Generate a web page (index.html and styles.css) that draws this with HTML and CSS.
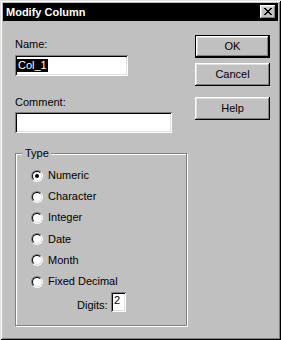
FILE: index.html
```html
<!DOCTYPE html>
<html>
<head>
<meta charset="utf-8">
<link rel="stylesheet" href="styles.css">
</head>
<body>
<div class="window">
  <div class="titlebar">
    <span class="title">Modify Column</span>
    <span class="close">
      <svg width="8" height="7" viewBox="0 0 8 7" shape-rendering="crispEdges"><path d="M0 0h2v1H0zM6 0h2v1H6zM1 1h2v1H1zM5 1h2v1H5zM2 2h4v1H2zM3 3h2v1H3zM2 4h4v1H2zM1 5h2v1H1zM5 5h2v1H5zM0 6h2v1H0zM6 6h2v1H6z" fill="#000"/></svg>
    </span>
  </div>
  <div class="content">
    <div class="left">
      <div class="label name-label">Name:</div>
      <div class="field name-field"><span class="sel">Col_1</span></div>
      <div class="label comment-label">Comment:</div>
      <div class="field comment-field"></div>
      <div class="group">
        <span class="legend">Type</span>
        <div class="options">
          <div class="option"><span class="radio checked"><span class="dot"></span></span><span class="opt-text">Numeric</span></div>
          <div class="option"><span class="radio"></span><span class="opt-text">Character</span></div>
          <div class="option"><span class="radio"></span><span class="opt-text">Integer</span></div>
          <div class="option"><span class="radio"></span><span class="opt-text">Date</span></div>
          <div class="option"><span class="radio"></span><span class="opt-text">Month</span></div>
          <div class="option"><span class="radio"></span><span class="opt-text">Fixed Decimal</span></div>
        </div>
        <div class="digits">
          <span class="digits-label">Digits:</span>
          <div class="field digits-field">2</div>
        </div>
      </div>
    </div>
    <div class="right">
      <div class="btn default">OK</div>
      <div class="btn cancel">Cancel</div>
      <div class="btn help">Help</div>
    </div>
  </div>
</div>
</body>
</html>
```
FILE: styles.css
```css
html, body {
  margin: 0;
  padding: 0;
  background: #c0c0c0;
}
body {
  font-family: "Liberation Sans", Arial, sans-serif;
  font-size: 11px;
  line-height: 13px;
  color: #000;
}
.window {
  width: 281px;
  height: 340px;
  box-sizing: border-box;
  padding: 3px;
  background: #c0c0c0;
  box-shadow: inset 1px 1px 0 #dfdfdf, inset -1px -1px 0 #000, inset 2px 2px 0 #fff, inset -2px -2px 0 #808080;
}
.titlebar {
  height: 18px;
  background: #000;
  display: flex;
  align-items: center;
  padding: 0 2px 0 3px;
}
.title {
  color: #fff;
  font-weight: bold;
  font-size: 11px;
  flex: 1;
}
.close {
  width: 16px;
  height: 14px;
  box-sizing: border-box;
  background: #c0c0c0;
  box-shadow: inset -1px -1px 0 #000, inset 1px 1px 0 #fff, inset -2px -2px 0 #808080, inset 2px 2px 0 #dfdfdf;
  display: flex;
  align-items: center;
  justify-content: center;
  padding: 0 1px 1px 0;
}
.close svg { display: block; }
.content {
  display: flex;
  padding: 0 8px 0 12px;
}
.left {
  width: 173px;
  display: flex;
  flex-direction: column;
  align-items: flex-start;
}
.label { height: 13px; }
.name-label { margin-top: 17px; }
.comment-label { margin-top: 20px; }
.field {
  box-sizing: border-box;
  background: #fff;
  box-shadow: inset 1px 1px 0 #808080, inset -1px -1px 0 #fff, inset 2px 2px 0 #000, inset -2px -2px 0 #dfdfdf;
  padding: 4px 0 0 2px;
}
.name-field {
  margin-top: 4px;
  width: 113px;
  height: 21px;
}
.comment-field {
  margin-top: 3px;
  width: 157px;
  height: 21px;
}
.sel {
  display: inline-block;
  background: #000;
  color: #fff;
  padding: 0 1px;
  height: 13px;
}
.group {
  position: relative;
  margin-top: 20px;
  width: 172px;
  box-sizing: border-box;
  border: 1px solid #808080;
  box-shadow: inset 1px 1px 0 #fff, 1px 1px 0 #fff;
  padding: 11px 0 13px 15px;
}
.legend {
  position: absolute;
  top: -7px;
  left: 6px;
  padding: 0 2px 0 3px;
  background: #c0c0c0;
}
.options {
  display: flex;
  flex-direction: column;
}
.option {
  height: 21.2px;
  display: flex;
  align-items: center;
}
.radio {
  width: 12px;
  height: 12px;
  box-sizing: border-box;
  border-radius: 50%;
  border: 1px solid;
  border-color: #808080 #fff #fff #808080;
  position: relative;
  flex: none;
}
.radio::before {
  content: "";
  position: absolute;
  inset: 0;
  border-radius: 50%;
  border: 1px solid;
  border-color: #000 #dfdfdf #dfdfdf #000;
  background: #fff;
}
.dot {
  position: absolute;
  left: 3px;
  top: 3px;
  width: 4px;
  height: 4px;
  border-radius: 50%;
  background: #000;
  z-index: 1;
}
.opt-text { margin-left: 5px; }
.digits {
  display: flex;
  align-items: flex-end;
  margin-left: 46px;
}
.digits-label { width: 34px; }
.digits-field {
  width: 15px;
  height: 20px;
  padding: 2px 0 0 3px;
}
.right {
  margin-left: auto;
  width: 75px;
  padding-top: 14px;
  display: flex;
  flex-direction: column;
}
.btn {
  width: 75px;
  height: 23px;
  box-sizing: border-box;
  background: #c0c0c0;
  display: flex;
  align-items: center;
  justify-content: center;
  box-shadow: inset -1px -1px 0 #000, inset 1px 1px 0 #fff, inset -2px -2px 0 #808080, inset 2px 2px 0 #dfdfdf;
}
.default {
  box-shadow: inset 0 0 0 1px #000, inset -2px -2px 0 #000, inset 2px 2px 0 #fff, inset -3px -3px 0 #808080, inset 3px 3px 0 #dfdfdf;
}
.cancel { margin-top: 5px; }
.help { margin-top: 11px; }
```
